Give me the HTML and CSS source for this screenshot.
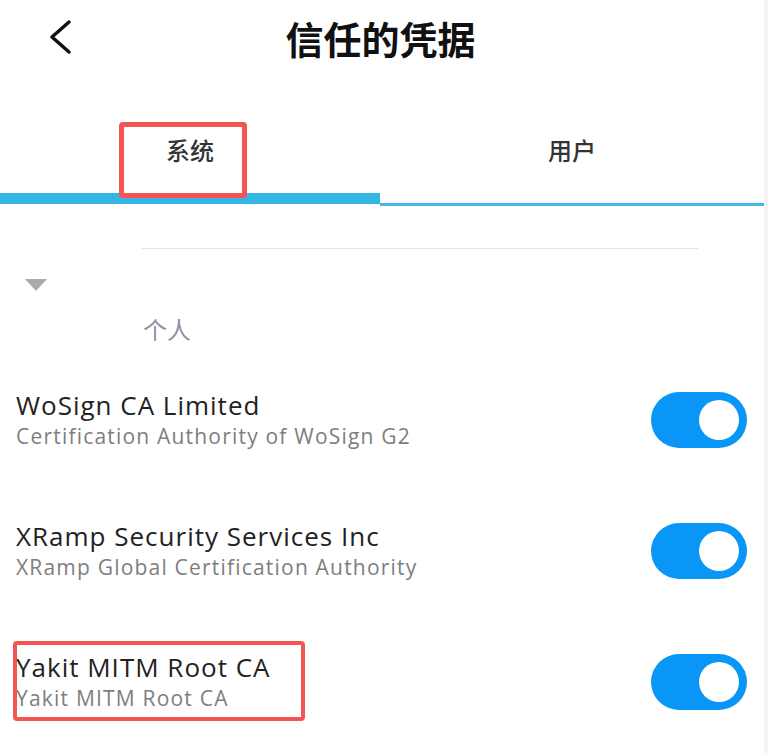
FILE: index.html
```html
<!DOCTYPE html>
<html>
<head>
    <title>信任的凭据</title>
    <link rel="stylesheet" href="styles.css">
</head>
<body>
    <div class="screen">
        <div class="header">
            <div class="back">
                <svg width="24" height="36" viewBox="0 0 24 36">
                    <polyline points="20,3 3,18 20,33" fill="none" stroke="#111" stroke-width="3.5" stroke-linecap="round" stroke-linejoin="round"/>
                </svg>
            </div>
            <div class="title">信任的凭据</div>
            <div></div>
        </div>

        <div class="tabs">
            <div class="tab active">
                <span class="tab-label">系统</span>
                <span class="mark-box tab-mark"></span>
            </div>
            <div class="tab">
                <span class="tab-label">用户</span>
            </div>
        </div>

        <div class="divider"></div>
        <div class="caret"></div>
        <div class="group-title">个人</div>

        <div class="list">
            <div class="row">
                <div class="row-text">
                    <div class="row-title">WoSign CA Limited</div>
                    <div class="row-sub">Certification Authority of WoSign G2</div>
                </div>
                <div class="switch on"><span class="knob"></span></div>
            </div>
            <div class="row">
                <div class="row-text">
                    <div class="row-title">XRamp Security Services Inc</div>
                    <div class="row-sub">XRamp Global Certification Authority</div>
                </div>
                <div class="switch on"><span class="knob"></span></div>
            </div>
            <div class="row">
                <div class="row-text">
                    <div class="row-title">Yakit MITM Root CA</div>
                    <div class="row-sub">Yakit MITM Root CA</div>
                </div>
                <div class="switch on"><span class="knob"></span></div>
                <span class="mark-box row-mark"></span>
            </div>
        </div>
    </div>
</body>
</html>
```

FILE: styles.css
```css
body {
    font-family: "Open Sans", "Noto Sans CJK SC", sans-serif;
    margin: 0;
    background-color: #f4f4f4;
    color: #222;
}

.screen {
    width: 764px;
    height: 753px;
    background-color: #fff;
    overflow: hidden;
}

.header {
    height: 78px;
    display: grid;
    grid-template-columns: 1fr auto 1fr;
    align-items: start;
}

.back {
    padding-left: 49px;
    padding-top: 19px;
    display: flex;
}

.title {
    font-family: "Noto Sans CJK SC", sans-serif;
    font-size: 38px;
    font-weight: 700;
    color: #111;
    line-height: 44px;
    padding-top: 16px;
    padding-right: 3px;
}

.tabs {
    display: grid;
    grid-template-columns: 380px 1fr;
    align-items: start;
    height: 128px;
}

.tab {
    position: relative;
    height: 128px;
    box-sizing: border-box;
    border-bottom: 3px solid #45b8e6;
    display: flex;
    justify-content: center;
    padding-top: 56px;
}

.tab.active {
    height: 126px;
    border-bottom: 11px solid #35b5e3;
}

.tab-label {
    font-family: "Noto Sans CJK SC", sans-serif;
    font-size: 24px;
    font-weight: 500;
    line-height: 32px;
    color: #333;
}

.mark-box {
    position: absolute;
    border: 5px solid #f35555;
    border-radius: 4px;
    box-sizing: border-box;
}

.tab-mark {
    left: 119px;
    top: 44px;
    width: 128px;
    height: 76px;
}

.divider {
    margin: 42px 66px 0 142px;
    height: 1px;
    background-color: #e5e5e7;
}

.caret {
    width: 0;
    height: 0;
    margin: 30px 0 0 25px;
    border-left: 11px solid transparent;
    border-right: 11px solid transparent;
    border-top: 12px solid #ababab;
}

.group-title {
    font-family: "Noto Sans CJK SC", sans-serif;
    font-size: 24px;
    line-height: 32px;
    color: #8e90a7;
    padding-left: 143px;
    margin-top: 22px;
}

.list {
    margin-top: 9px;
}

.row {
    position: relative;
    height: 131px;
    display: flex;
    align-items: center;
    justify-content: space-between;
    padding: 0 17px 0 16px;
}

.row-title {
    font-size: 26px;
    line-height: 32px;
    letter-spacing: 1px;
    color: #222;
}

.row-sub {
    font-size: 21px;
    line-height: 30px;
    letter-spacing: 1.2px;
    color: #7e7e7e;
}

.switch {
    width: 96px;
    height: 56px;
    border-radius: 28px;
    background-color: #0996f7;
    display: flex;
    align-items: center;
    justify-content: flex-end;
    padding-right: 8px;
    box-sizing: border-box;
}

.knob {
    width: 40px;
    height: 40px;
    border-radius: 50%;
    background-color: #fff;
}

.row-mark {
    left: 13px;
    top: 25px;
    width: 292px;
    height: 80px;
    border-width: 4px;
}
```
